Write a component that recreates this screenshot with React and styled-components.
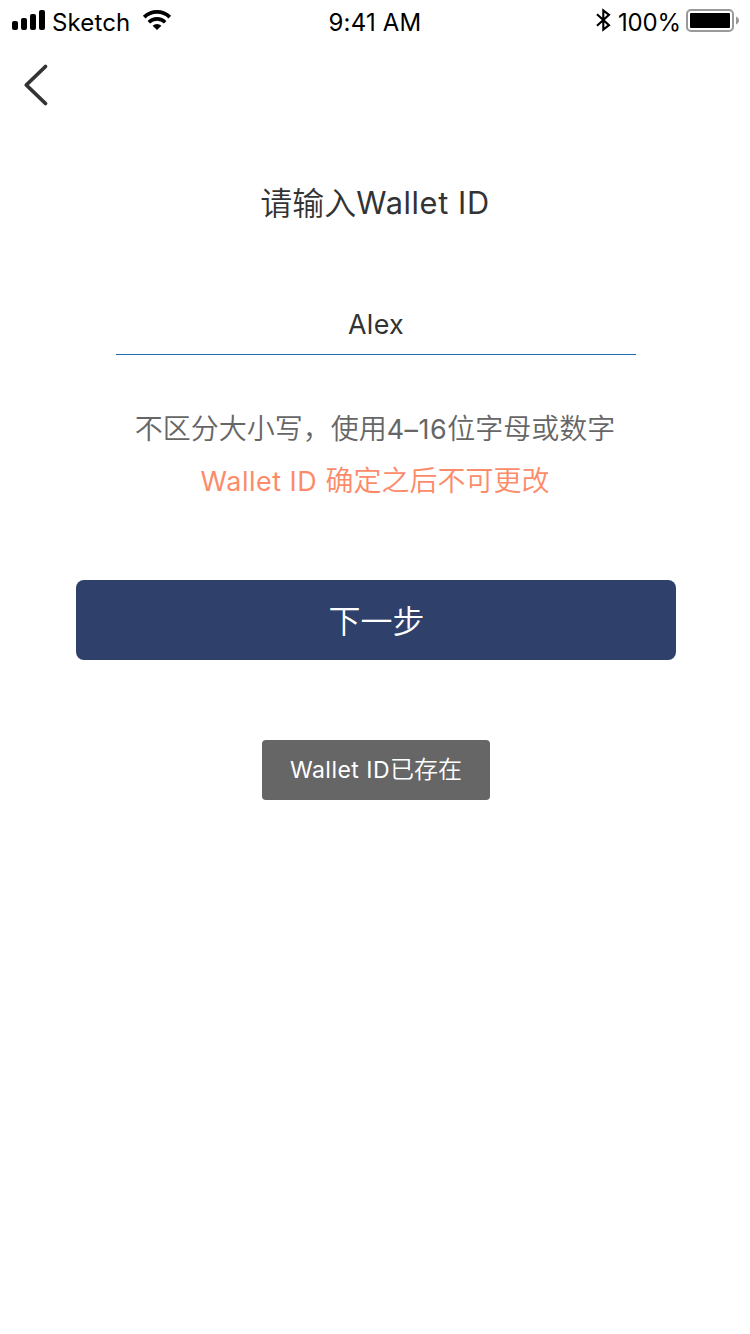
import React from "react";
import styled, { createGlobalStyle } from "styled-components";

const GlobalStyle = createGlobalStyle`
  *, *::before, *::after { box-sizing: border-box; }
  body {
    margin: 0;
    background: #fff;
    font-family: Inter, "Noto Sans CJK SC", sans-serif;
  }
`;

const Screen = styled.div`
  width: 750px;
  height: 1334px;
  display: flex;
  flex-direction: column;
  background: #fff;
  color: #333;
  overflow: hidden;
`;

const StatusBar = styled.header`
  height: 40px;
  display: grid;
  grid-template-columns: 1fr auto 1fr;
  color: #000;
  font-size: 24px;
  line-height: 46px;
  white-space: nowrap;
`;

const StatusGroup = styled.div`
  display: flex;
  justify-content: ${(p) => (p.$end ? "flex-end" : "flex-start")};
`;

const StatusText = styled.span`
  letter-spacing: ${(p) => p.$spacing || "0"};
`;

const StatusIcon = styled.svg`
  display: block;
  flex: none;
`;

const NavBar = styled.nav`
  height: 88px;
  display: flex;
`;

const BackButton = styled.button`
  width: 80px;
  height: 88px;
  padding: 0;
  border: 0;
  background: none;
`;

const Form = styled.main`
  display: flex;
  flex-direction: column;
  align-items: center;
  font-weight: 350;
`;

const Title = styled.h1`
  height: 48px;
  margin: 52px 0 0;
  font-size: 32px;
  line-height: 48px;
  font-weight: inherit;
  white-space: nowrap;
`;

const Latin = styled.span`
  font-size: 0.96em;
  font-weight: 400;
  line-height: 1;
  vertical-align: ${(p) => p.$raise || "0"};
  letter-spacing: ${(p) => p.$spacing || "0.02em"};
`;

const Field = styled.div`
  width: 520px;
  height: 55px;
  margin: 72px 0 0 2px;
  border-bottom: 1px solid #1f6bb5;
  font-size: 28px;
  line-height: 50px;
  text-align: center;
`;

const Hint = styled.p`
  height: 52px;
  margin: ${(p) => p.$top} 0 0;
  color: ${(p) => p.$color};
  font-size: 28px;
  line-height: 52px;
  white-space: nowrap;
`;

const NextButton = styled.button`
  width: 600px;
  height: 80px;
  margin: 73px 0 0 2px;
  padding: 4px 0 0 1px;
  border: 0;
  border-radius: 8px;
  background: #2f406b;
  color: #fff;
  font: inherit;
  font-size: 32px;
  line-height: 76px;
`;

const Toast = styled.div`
  width: 228px;
  height: 60px;
  margin: 80px 0 0 2px;
  border-radius: 4px;
  background: #666;
  color: #fff;
  font-size: 24px;
  line-height: 60px;
  text-align: center;
  white-space: nowrap;
`;

function SignalIcon() {
  return (
    <StatusIcon width="52" height="40" viewBox="0 0 52 40">
      <rect x="12" y="21" width="6" height="9" rx="2" />
      <rect x="21" y="18" width="6" height="12" rx="2" />
      <rect x="30" y="14" width="6" height="16" rx="2" />
      <rect x="39" y="10" width="6" height="20" rx="2" />
    </StatusIcon>
  );
}

function WifiIcon() {
  return (
    <StatusIcon width="44" height="40" viewBox="0 0 44 40">
      <g fill="none" stroke="#000">
        <path d="M14.2 17.1A18.4 18.4 0 0 1 39.8 17.1" strokeWidth="3.8" />
        <path d="M18.8 22.2A11.8 11.8 0 0 1 35.2 22.2" strokeWidth="3.6" />
      </g>
      <path d="M22.6 25.8A6.3 6.3 0 0 1 31.4 25.8L27 30Z" />
    </StatusIcon>
  );
}

function BluetoothIcon() {
  return (
    <StatusIcon width="24" height="40" viewBox="0 0 24 40">
      <path
        d="M3 14.2L15 25.2L9.3 29.6V10.4L15 14.8L3 25.8"
        fill="none"
        stroke="#000"
        strokeWidth="2.1"
      />
    </StatusIcon>
  );
}

function BatteryIcon() {
  return (
    <StatusIcon width="69" height="40" viewBox="1 0 69 40">
      <rect x="7" y="10" width="46" height="21" rx="4" fill="none" stroke="#999" strokeWidth="2" />
      <rect x="10" y="13" width="40" height="15" rx="1" />
      <path d="M56 16.5C58 17.3 59 18.8 59 20.5S58 23.7 56 24.5Z" fill="#999" />
    </StatusIcon>
  );
}

export default function App() {
  return (
    <>
      <GlobalStyle />
      <Screen>
        <StatusBar>
          <StatusGroup>
            <SignalIcon />
            <StatusText $spacing="0.15px">Sketch</StatusText>
            <WifiIcon />
          </StatusGroup>
          <StatusText $spacing="0.2px">9:41 AM</StatusText>
          <StatusGroup $end>
            <BluetoothIcon />
            <StatusText $spacing="-0.15px">100%</StatusText>
            <BatteryIcon />
          </StatusGroup>
        </StatusBar>
        <NavBar>
          <BackButton aria-label="返回">
            <svg width="80" height="88" viewBox="0 0 80 88" fill="none" stroke="#333" strokeWidth="3.8" strokeLinecap="round" strokeLinejoin="round">
              <path d="M45.5 26.5L26.3 45L45.5 63.5" />
            </svg>
          </BackButton>
        </NavBar>
        <Form>
          <Title>请输入<Latin $raise="1px">Wallet ID</Latin></Title>
          <Field><Latin $raise="1px" $spacing="0.01em">Alex</Latin></Field>
          <Hint $top="48px" $color="#666">
            不区分大小写，使用<Latin>4–16</Latin>位字母或数字
          </Hint>
          <Hint $top="0" $color="#fc8b69">
            <Latin>Wallet ID </Latin>确定之后不可更改
          </Hint>
          <NextButton>下一步</NextButton>
          <Toast><Latin>Wallet ID</Latin>已存在</Toast>
        </Form>
      </Screen>
    </>
  );
}
